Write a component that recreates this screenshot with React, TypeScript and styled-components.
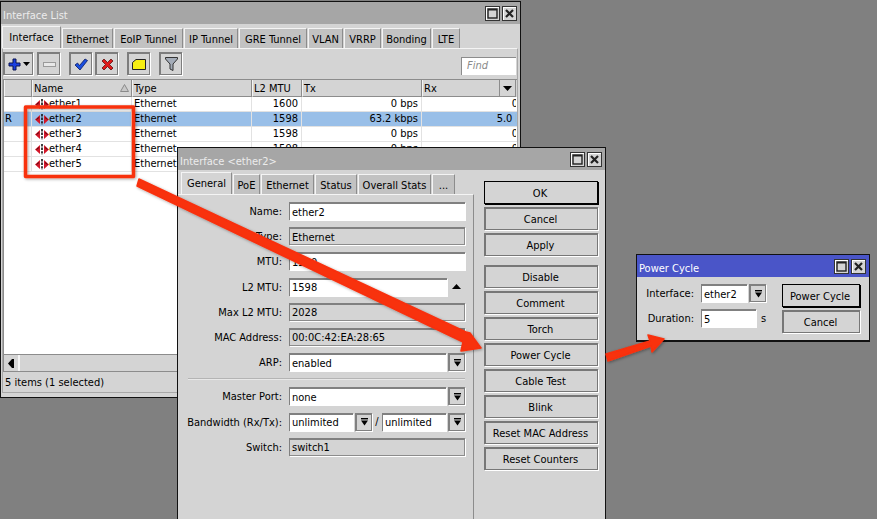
import { FC } from 'react';
import styled, { createGlobalStyle } from 'styled-components';

const GlobalStyle = createGlobalStyle`
  html, body {
    margin: 0;
    padding: 0;
    background: #808080;
  }

  body {
    font-family: "DejaVu Sans Condensed", "Noto Sans", sans-serif;
    font-size: 11px;
    color: #000;
  }
`;

const interfaces = [
  { flag: '', name: 'ether1', mtu: '1600', tx: '0 bps', rx: '0 bps' },
  { flag: 'R', name: 'ether2', mtu: '1598', tx: '63.2 kbps', rx: '5.0 kbps', selected: true },
  { flag: '', name: 'ether3', mtu: '1598', tx: '0 bps', rx: '0 bps' },
  { flag: '', name: 'ether4', mtu: '1598', tx: '0 bps', rx: '0 bps' },
  { flag: '', name: 'ether5', mtu: '1598', tx: '0 bps', rx: '0 bps' },
];

const listTabs = ['Ethernet', 'EoIP Tunnel', 'IP Tunnel', 'GRE Tunnel', 'VLAN', 'VRRP', 'Bonding', 'LTE'];
const editTabs = ['PoE', 'Ethernet', 'Status', 'Overall Stats', '...'];

const Desktop = styled.div`
  position: relative;
  width: 877px;
  height: 519px;
  overflow: hidden;
  background: #808080;
`;

const Window = styled.div`
  position: absolute;
  box-sizing: border-box;
  display: flex;
  flex-direction: column;
  background: #d4d4d4;
  border: 1px solid #111;
`;

const ListWindow = styled(Window)`
  left: 0;
  top: 1px;
  width: 521px;
  height: 397px;
`;

const EditWindow = styled(Window)`
  left: 177px;
  top: 147px;
  width: 429px;
  height: 400px;
`;

const CycleWindow = styled(Window)`
  left: 636px;
  top: 254px;
  width: 234px;
  height: 88px;
  border-bottom-width: 2px;
`;

const TitleBar = styled.div<{ $active?: boolean }>`
  flex: none;
  height: 22px;
  display: flex;
  align-items: center;
  justify-content: space-between;
  padding: 0 3px 0 2px;
  background: ${props => (props.$active ? '#4a55c8' : '#a6a6a6')};
  color: ${props => (props.$active ? '#fff' : '#ececec')};
`;

const TitleText = styled.span`
  padding-top: 5px;
`;

const TitleButtons = styled.div`
  display: flex;
  gap: 2px;
`;

const TitleButton = styled.div`
  box-sizing: border-box;
  width: 15px;
  height: 15px;
  display: flex;
  align-items: center;
  justify-content: center;
  background: #d4d4d4;
  border: 1px solid #333;
  box-shadow: inset 1px 1px 0 #fff;
`;

const TabBar = styled.div<{ $left?: number }>`
  flex: none;
  height: 24px;
  display: flex;
  align-items: flex-end;
  gap: 1px;
  padding-left: ${props => props.$left ?? 1}px;
`;

const Tab = styled.div<{ $active?: boolean; $width: number }>`
  box-sizing: border-box;
  width: ${props => props.$width}px;
  height: ${props => (props.$active ? 22 : 20)}px;
  display: flex;
  align-items: center;
  justify-content: center;
  padding-top: ${props => (props.$active ? 0 : 1)}px;
  background: ${props => (props.$active ? '#d4d4d4' : '#c2c2c2')};
  border-top: 1px solid #f4f4f4;
  border-left: 1px solid #f4f4f4;
  border-right: 1px solid #8c8c8c;
  white-space: nowrap;
`;

const ListPanel = styled.div`
  flex: 1;
  min-height: 0;
  margin: 0 2px 4px 1px;
  display: flex;
  flex-direction: column;
  border: 1px solid #a8a8a8;
  border-top-color: #f4f4f4;
`;

const Toolbar = styled.div`
  flex: none;
  height: 23px;
  margin: 3px 1px 4px 0;
  display: flex;
  gap: 9px;
`;

const ToolGroup = styled.div<{ $gap: number }>`
  display: flex;
  gap: ${props => props.$gap}px;
`;

const ToolButton = styled.div<{ $width?: number }>`
  box-sizing: border-box;
  width: ${props => props.$width ?? 23}px;
  height: 23px;
  display: flex;
  align-items: center;
  justify-content: center;
  gap: 2px;
  background: #d4d4d4;
  border: 1px solid #7d7d7d;
  border-width: 2px 1px 1px 2px;
  box-shadow: 1px 1px 0 #fff;
`;

const FindInput = styled.div`
  box-sizing: border-box;
  align-self: flex-end;
  width: 55px;
  height: 18px;
  margin-left: auto;
  padding: 1px 5px;
  background: #fff;
  border: 1px solid #8c8c8c;
  border-width: 1px 0 0 1px;
  color: #8a8a8a;
  font-style: italic;
`;

const Table = styled.div`
  flex: 1;
  min-height: 0;
  display: flex;
  flex-direction: column;
  background: #fff;
  border-left: 1px solid #8c8c8c;
`;

const columns = '28px 100px 120px 50px 120px 94px';

const HeaderRow = styled.div`
  flex: none;
  height: 17px;
  display: grid;
  grid-template-columns: ${columns};
  background: #d4d4d4;
  border-top: 1px solid #8c8c8c;
`;

const HeaderCell = styled.div`
  box-sizing: border-box;
  position: relative;
  display: flex;
  align-items: center;
  padding-left: 1px;
  border-right: 1px solid #8c8c8c;
  border-left: 1px solid #f4f4f4;
  border-bottom: 1px solid #8c8c8c;
`;

const SortBox = styled.div`
  position: absolute;
  top: 0;
  right: 0;
  bottom: 0;
  width: 15px;
  display: flex;
  align-items: center;
  justify-content: center;
  border-left: 1px solid #8c8c8c;
`;

const SortMark = styled.div`
  position: absolute;
  top: 4px;
  right: 2px;
  display: flex;
`;

const Rows = styled.div`
  flex: 1;
  min-height: 0;
`;

const Row = styled.div<{ $selected?: boolean }>`
  box-sizing: border-box;
  height: 15px;
  display: grid;
  grid-template-columns: ${columns};
  background: ${props => (props.$selected ? '#99bfe8' : '#fff')};
  border-bottom: 1px solid #e2e2e2;
`;

const Cell = styled.div<{ $right?: boolean }>`
  box-sizing: border-box;
  display: flex;
  align-items: center;
  justify-content: ${props => (props.$right ? 'flex-end' : 'flex-start')};
  padding: 0 3px 2px 2px;
  overflow: hidden;
  white-space: nowrap;
  border-right: 1px solid #e2e2e2;
`;

const FlagCell = styled(Cell)`
  padding-left: 1px;
`;

const NameCell = styled(Cell)`
  padding-left: 3px;
`;

const EtherIconBox = styled.span`
  flex: none;
  display: flex;
  padding-top: 2px;
`;

const ClippedCell = styled.div`
  overflow: hidden;
  display: flex;
  align-items: center;
  padding-bottom: 2px;
  white-space: nowrap;
`;

const ClippedValue = styled.span`
  flex: none;
  box-sizing: border-box;
  width: 117px;
  text-align: right;
`;

const ScrollBar = styled.div`
  flex: none;
  height: 16px;
  display: flex;
  background: #d4d4d4;
  border-top: 1px solid #8c8c8c;
  border-bottom: 1px solid #8c8c8c;
`;

const ScrollButton = styled.div`
  box-sizing: border-box;
  width: 16px;
  display: flex;
  align-items: center;
  justify-content: center;
  border-right: 2px solid #f4f4f4;
`;

const StatusBar = styled.div`
  flex: none;
  height: 20px;
  display: flex;
  align-items: center;
  padding-left: 2px;
`;

const EditBody = styled.div`
  flex: 1;
  min-height: 0;
  display: flex;
`;

const EditMain = styled.div`
  flex: none;
  width: 296px;
  display: flex;
  flex-direction: column;
`;

const FormPanel = styled.div`
  flex: 1;
  padding-top: 7px;
  border-top: 1px solid #f4f4f4;
  border-right: 1px solid #8c8c8c;
`;

const FormRow = styled.div`
  height: 18px;
  margin-bottom: 7.2px;
  display: flex;
  align-items: center;
`;

const FieldLabel = styled.label<{ $width?: number }>`
  flex: none;
  width: ${props => props.$width ?? 104}px;
  margin-right: 7px;
  padding-top: 1px;
  text-align: right;
  white-space: nowrap;
`;

const Input = styled.div<{ $width: number; $readOnly?: boolean }>`
  flex: none;
  box-sizing: border-box;
  width: ${props => props.$width}px;
  height: 18px;
  padding-left: 2px;
  display: flex;
  align-items: center;
  white-space: nowrap;
  overflow: hidden;
  background: ${props => (props.$readOnly ? '#d4d4d4' : '#fff')};
  border: 1px solid #808080;
  border-width: 2px 0 0 1px;
  box-shadow: ${props => (props.$readOnly ? 'inset -1px -1px 0 #8c8c8c, 1px 1px 0 #fff' : '1px 1px 0 #fff')};
`;

const DropButton = styled.div`
  flex: none;
  box-sizing: border-box;
  width: 17px;
  height: 18px;
  margin-left: 2px;
  display: flex;
  align-items: center;
  justify-content: center;
  background: #d4d4d4;
  border: 1px solid #808080;
  border-width: 2px 1px 1px 2px;
  box-shadow: 1px 1px 0 #fff;
`;

const SpinArrow = styled.div`
  flex: none;
  width: 18px;
  display: flex;
  justify-content: center;
`;

const Slash = styled.span`
  flex: none;
  width: 10px;
  text-align: center;
`;

const Separator = styled.div`
  height: 1px;
  margin: 1.6px 8px 8px 10px;
  background: #b4b4b4;
  box-shadow: 0 1px 0 #e8e8e8;
`;

const SideButtons = styled.div`
  flex: none;
  width: 114px;
  margin-left: 10px;
  padding-top: 11px;
  display: flex;
  flex-direction: column;
  gap: 3px;
`;

const Button = styled.div<{ $primary?: boolean; $spaced?: boolean }>`
  flex: none;
  box-sizing: border-box;
  height: 23px;
  margin-top: ${props => (props.$spaced ? 6 : 0)}px;
  padding: ${props => (props.$primary ? 1 : 0)}px 2px 0 0;
  display: flex;
  align-items: center;
  justify-content: center;
  background: #d4d4d4;
  white-space: nowrap;
  border: 1px solid ${props => (props.$primary ? '#000' : '#777')};
  border-width: ${props => (props.$primary ? '1px' : '2px 1px 1px 2px')};
  box-shadow: 1px 1px 0 ${props => (props.$primary ? '#000' : '#fff')};
`;

const CycleBody = styled.div`
  flex: 1;
  display: flex;
  padding-top: 7px;
`;

const CycleForm = styled.div`
  flex: none;
  width: 145px;
`;

const UnitLabel = styled.span`
  margin-left: 5px;
`;

const CycleButtons = styled.div`
  flex: none;
  width: 78px;
  display: flex;
  flex-direction: column;
  gap: 3px;
`;

const Overlay = styled.svg`
  position: absolute;
  left: 0;
  top: 0;
  pointer-events: none;
`;

const MaximizeIcon: FC = () => (
  <svg width="11" height="11" viewBox="0 0 11 11">
    <rect x="1" y="1" width="9" height="9" fill="none" stroke="#222" strokeWidth="1.4" />
    <rect x="1" y="1" width="9" height="1.5" fill="#222" />
  </svg>
);

const CloseIcon: FC = () => (
  <svg width="11" height="11" viewBox="0 0 11 11">
    <path d="M2 2 L9 9 M9 2 L2 9" stroke="#222" strokeWidth="2.2" />
  </svg>
);

const WindowControls: FC = () => (
  <TitleButtons>
    <TitleButton><MaximizeIcon /></TitleButton>
    <TitleButton><CloseIcon /></TitleButton>
  </TitleButtons>
);

const EtherIcon: FC = () => (
  <svg width="14" height="11" viewBox="0 0 14 11">
    <path d="M0 5.5 L5 1 V10 Z" fill="#d3172a" />
    <path d="M14 5.5 L9 1 V10 Z" fill="#d3172a" />
    <path d="M1.5 5.5 L4 3.5" stroke="#4a0c0c" strokeWidth="1" />
    <path d="M12.5 5.5 L10 3.5" stroke="#4a0c0c" strokeWidth="1" />
    <path d="M7 0 V11" stroke="#111" strokeWidth="1.6" strokeDasharray="2.4 1.2" />
  </svg>
);

const DropIcon: FC = () => (
  <svg width="7" height="8" viewBox="0 0 7 8">
    <rect x="0" y="0" width="7" height="1.4" fill="#000" />
    <path d="M0 2.6 H7 L3.5 7.6 Z" fill="#000" />
  </svg>
);

const Dropdown: FC = () => (
  <DropButton><DropIcon /></DropButton>
);

const Arrows: FC = () => (
  <Overlay width="877" height="519" viewBox="0 0 877 519">
    <defs>
      <filter id="arrowShadow" x="-10%" y="-10%" width="120%" height="120%">
        <feDropShadow dx="1" dy="1" stdDeviation="1.5" floodColor="#000" floodOpacity="0.35" />
      </filter>
    </defs>
    <g filter="url(#arrowShadow)" fill="#f8300c" stroke="#f8300c" strokeLinejoin="round">
      <rect x="25.5" y="107" width="108" height="69.5" fill="none" strokeWidth="3.5" />
      <path d="M139 179 L466 332 L470 333 L481 348 L461 351 L463 342 L137 186 Z" strokeWidth="1.5" />
      <path d="M606 354 L650 341 L648 335 L664 339 L652 352 L651 346 L608 361 Z" strokeWidth="1.5" />
    </g>
  </Overlay>
);

const App: FC = () => (
  <Desktop>
    <GlobalStyle />

    <ListWindow>
      <TitleBar>
        <TitleText>Interface List</TitleText>
        <WindowControls />
      </TitleBar>
      <TabBar>
        <Tab $active $width={59}>Interface</Tab>
        {listTabs.map((tab, i) => (
          <Tab key={tab} $width={[51, 69, 54, 68, 35, 37, 49, 28][i]}>{tab}</Tab>
        ))}
      </TabBar>
      <ListPanel>
        <Toolbar>
          <ToolGroup $gap={4}>
            <ToolButton $width={30}>
              <svg width="13" height="13" viewBox="0 0 13 13">
                <path d="M5 1 H8 V5 H12 V8 H8 V12 H5 V8 H1 V5 H5 Z" fill="#1a3fe0" stroke="#0a1450" strokeWidth="1" />
              </svg>
              <svg width="7" height="4" viewBox="0 0 7 4">
                <path d="M0 0 H7 L3.5 4 Z" fill="#000" />
              </svg>
            </ToolButton>
            <ToolButton>
              <svg width="13" height="5" viewBox="0 0 13 5">
                <rect x="0.5" y="0.5" width="12" height="4" fill="#e8e8e8" stroke="#9a9a9a" />
              </svg>
            </ToolButton>
          </ToolGroup>
          <ToolGroup $gap={3}>
            <ToolButton>
              <svg width="14" height="13" viewBox="0 0 14 13">
                <path d="M1 7 L3.5 5 L5.5 7.5 L11 1 L13.5 2.5 L6 12 Z" fill="#1a4fe0" stroke="#0a1860" strokeWidth="0.8" />
              </svg>
            </ToolButton>
            <ToolButton>
              <svg width="13" height="13" viewBox="0 0 13 13">
                <path d="M1 3 L3 1 L6.5 4.5 L10 1 L12 3 L8.5 6.5 L12 10 L10 12 L6.5 8.5 L3 12 L1 10 L4.5 6.5 Z" fill="#e01a1a" stroke="#601010" strokeWidth="0.8" />
              </svg>
            </ToolButton>
          </ToolGroup>
          <ToolButton>
            <svg width="14" height="11" viewBox="0 0 14 11">
              <path d="M4 0.5 H13.5 V10.5 H0.5 V3.5 Z" fill="#f6ee12" stroke="#222" strokeWidth="1" />
            </svg>
          </ToolButton>
          <ToolButton>
            <svg width="13" height="14" viewBox="0 0 13 14">
              <path d="M0.5 0.5 H12.5 V2 L8 7 V13.5 L5 12 V7 L0.5 2 Z" fill="#a4acb8" stroke="#333" strokeWidth="1" />
            </svg>
          </ToolButton>
          <FindInput>Find</FindInput>
        </Toolbar>
        <Table>
          <HeaderRow>
            <HeaderCell />
            <HeaderCell>
              Name
              <SortMark>
                <svg width="9" height="8" viewBox="0 0 9 8">
                  <path d="M4.5 0.5 L8.5 7.5 H0.5 Z" fill="#c8c8c8" stroke="#8a8a8a" />
                </svg>
              </SortMark>
            </HeaderCell>
            <HeaderCell>Type</HeaderCell>
            <HeaderCell>L2 MTU</HeaderCell>
            <HeaderCell>Tx</HeaderCell>
            <HeaderCell>
              Rx
              <SortBox>
                <svg width="9" height="5" viewBox="0 0 9 5">
                  <path d="M0 0 H9 L4.5 5 Z" fill="#000" />
                </svg>
              </SortBox>
            </HeaderCell>
          </HeaderRow>
          <Rows>
            {interfaces.map(item => (
              <Row key={item.name} $selected={item.selected}>
                <FlagCell>{item.flag}</FlagCell>
                <NameCell><EtherIconBox><EtherIcon /></EtherIconBox>{item.name}</NameCell>
                <Cell>Ethernet</Cell>
                <Cell $right>{item.mtu}</Cell>
                <Cell $right>{item.tx}</Cell>
                <ClippedCell><ClippedValue>{item.rx}</ClippedValue></ClippedCell>
              </Row>
            ))}
          </Rows>
          <ScrollBar>
            <ScrollButton>
              <svg width="7" height="9" viewBox="0 0 7 9">
                <path d="M0 4.5 L4 0 H6 V9 H4 Z" fill="#000" />
              </svg>
            </ScrollButton>
          </ScrollBar>
        </Table>
        <StatusBar>5 items (1 selected)</StatusBar>
      </ListPanel>
    </ListWindow>

    <EditWindow>
      <TitleBar>
        <TitleText>Interface &lt;ether2&gt;</TitleText>
        <WindowControls />
      </TitleBar>
      <EditBody>
        <EditMain>
          <TabBar $left={3}>
            <Tab $active $width={51}>General</Tab>
            {editTabs.map((tab, i) => (
              <Tab key={tab} $width={[27, 53, 42, 73, 23][i]}>{tab}</Tab>
            ))}
          </TabBar>
          <FormPanel>
            <FormRow><FieldLabel>Name:</FieldLabel><Input $width={176}>ether2</Input></FormRow>
            <FormRow><FieldLabel>Type:</FieldLabel><Input $width={176} $readOnly>Ethernet</Input></FormRow>
            <FormRow><FieldLabel>MTU:</FieldLabel><Input $width={176}>1500</Input></FormRow>
            <FormRow>
              <FieldLabel>L2 MTU:</FieldLabel>
              <Input $width={158}>1598</Input>
              <SpinArrow>
                <svg width="9" height="5" viewBox="0 0 9 5">
                  <path d="M4.5 0 L9 5 H0 Z" fill="#000" />
                </svg>
              </SpinArrow>
            </FormRow>
            <FormRow><FieldLabel>Max L2 MTU:</FieldLabel><Input $width={176} $readOnly>2028</Input></FormRow>
            <FormRow><FieldLabel>MAC Address:</FieldLabel><Input $width={176} $readOnly>00:0C:42:EA:28:65</Input></FormRow>
            <FormRow><FieldLabel>ARP:</FieldLabel><Input $width={157}>enabled</Input><Dropdown /></FormRow>
            <Separator />
            <FormRow><FieldLabel>Master Port:</FieldLabel><Input $width={157}>none</Input><Dropdown /></FormRow>
            <FormRow>
              <FieldLabel>Bandwidth (Rx/Tx):</FieldLabel>
              <Input $width={64}>unlimited</Input>
              <Dropdown />
              <Slash>/</Slash>
              <Input $width={64}>unlimited</Input>
              <Dropdown />
            </FormRow>
            <FormRow><FieldLabel>Switch:</FieldLabel><Input $width={176} $readOnly>switch1</Input></FormRow>
          </FormPanel>
        </EditMain>
        <SideButtons>
          <Button $primary>OK</Button>
          <Button>Cancel</Button>
          <Button>Apply</Button>
          <Button $spaced>Disable</Button>
          <Button>Comment</Button>
          <Button>Torch</Button>
          <Button>Power Cycle</Button>
          <Button>Cable Test</Button>
          <Button>Blink</Button>
          <Button>Reset MAC Address</Button>
          <Button>Reset Counters</Button>
        </SideButtons>
      </EditBody>
    </EditWindow>

    <CycleWindow>
      <TitleBar $active>
        <TitleText>Power Cycle</TitleText>
        <WindowControls />
      </TitleBar>
      <CycleBody>
        <CycleForm>
          <FormRow>
            <FieldLabel $width={57}>Interface:</FieldLabel>
            <Input $width={46}>ether2</Input>
            <Dropdown />
          </FormRow>
          <FormRow>
            <FieldLabel $width={57}>Duration:</FieldLabel>
            <Input $width={55}>5</Input>
            <UnitLabel>s</UnitLabel>
          </FormRow>
        </CycleForm>
        <CycleButtons>
          <Button $primary>Power Cycle</Button>
          <Button>Cancel</Button>
        </CycleButtons>
      </CycleBody>
    </CycleWindow>

    <Arrows />
  </Desktop>
);

export default App;
